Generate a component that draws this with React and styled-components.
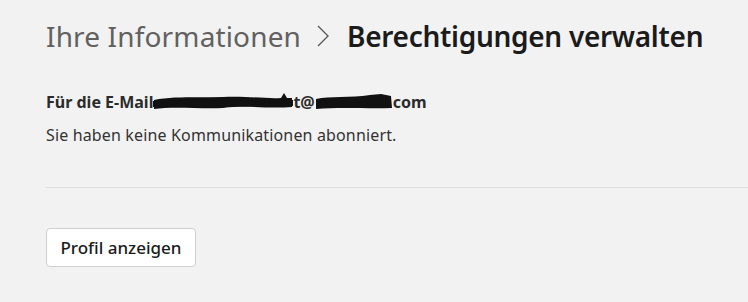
import React from "react";
import styled, { createGlobalStyle } from "styled-components";

const Global = createGlobalStyle`
  html, body { margin: 0; padding: 0; background: #f2f2f2; }
  body { font-family: "Noto Sans", "Open Sans", sans-serif; }
`;

const Page = styled.main`
  padding: 16px 0 0 46px;
  box-sizing: border-box;
  width: 748px;
  height: 302px;
  overflow: hidden;
  background: #f2f2f2;
`;

const Breadcrumb = styled.h1`
  margin: 0;
  display: flex;
  align-items: center;
  font-size: 28px;
  line-height: 40px;
  font-weight: 400;
`;

const Crumb = styled.span`
  color: ${(p) => (p.$current ? "#1b1b1b" : "#616161")};
  font-weight: ${(p) => (p.$current ? 600 : 400)};
  letter-spacing: ${(p) => (p.$current ? "-0.3px" : "0.15px")};
`;

const Chevron = styled.svg`
  width: 14px;
  height: 22px;
  flex: none;
  margin: 0 17px 0 15px;
`;

const Section = styled.section`
  margin-top: 35px;
`;

const EmailLine = styled.div`
  display: flex;
  align-items: center;
  font-size: 16px;
  font-weight: 700;
  color: #2b2b2b;
  line-height: 22px;
`;

const Redaction = styled.svg`
  flex: none;
`;

const Note = styled.p`
  margin: 11px 0 0;
  font-size: 16px;
  color: #333;
  line-height: 22px;
  letter-spacing: 0.15px;
`;

const Divider = styled.hr`
  margin: 41px 0 0;
  border: 0;
  border-top: 1px solid #dedede;
`;

const Button = styled.button`
  margin-top: 40px;
  width: 150px;
  height: 39px;
  background: #fff;
  border: 1px solid #cfcfcf;
  border-radius: 4px;
  font-family: "Noto Sans", sans-serif;
  font-size: 17px;
  font-weight: 500;
  color: #1b1b1b;
  padding: 0;
  cursor: pointer;
`;

export default function App() {
  return (
    <>
      <Global />
      <Page>
        <Breadcrumb>
          <Crumb>Ihre Informationen</Crumb>
          <Chevron viewBox="0 0 14 22" aria-hidden="true">
            <path d="M2 1 L12 11 L2 21" fill="none" stroke="#555" strokeWidth="1.3" />
          </Chevron>
          <Crumb $current>Berechtigungen verwalten</Crumb>
        </Breadcrumb>
        <Section>
          <EmailLine>
            <span>Für die E-Mail</span>
            <Redaction width="140" height="20" viewBox="0 0 140 20" aria-hidden="true">
              <path d="M1 8 C20 4 45 6 70 5 C95 4 115 7 128 6 L131 1 L134 6 L139 6 L139 15 C115 17 95 13 70 16 C45 17 20 14 1 17 Z" fill="#111" />
              <path d="M0 12 L140 11" stroke="#111" strokeWidth="6" />
            </Redaction>
            <span>t@</span>
            <Redaction width="78" height="20" viewBox="0 0 78 20" aria-hidden="true">
              <path d="M1 7 C15 4 35 6 55 3 L66 2 L76 4 L77 16 C55 17 25 15 1 17 Z" fill="#111" />
            </Redaction>
            <span>com</span>
          </EmailLine>
          <Note>Sie haben keine Kommunikationen abonniert.</Note>
          <Divider />
          <Button>Profil anzeigen</Button>
        </Section>
      </Page>
    </>
  );
}
